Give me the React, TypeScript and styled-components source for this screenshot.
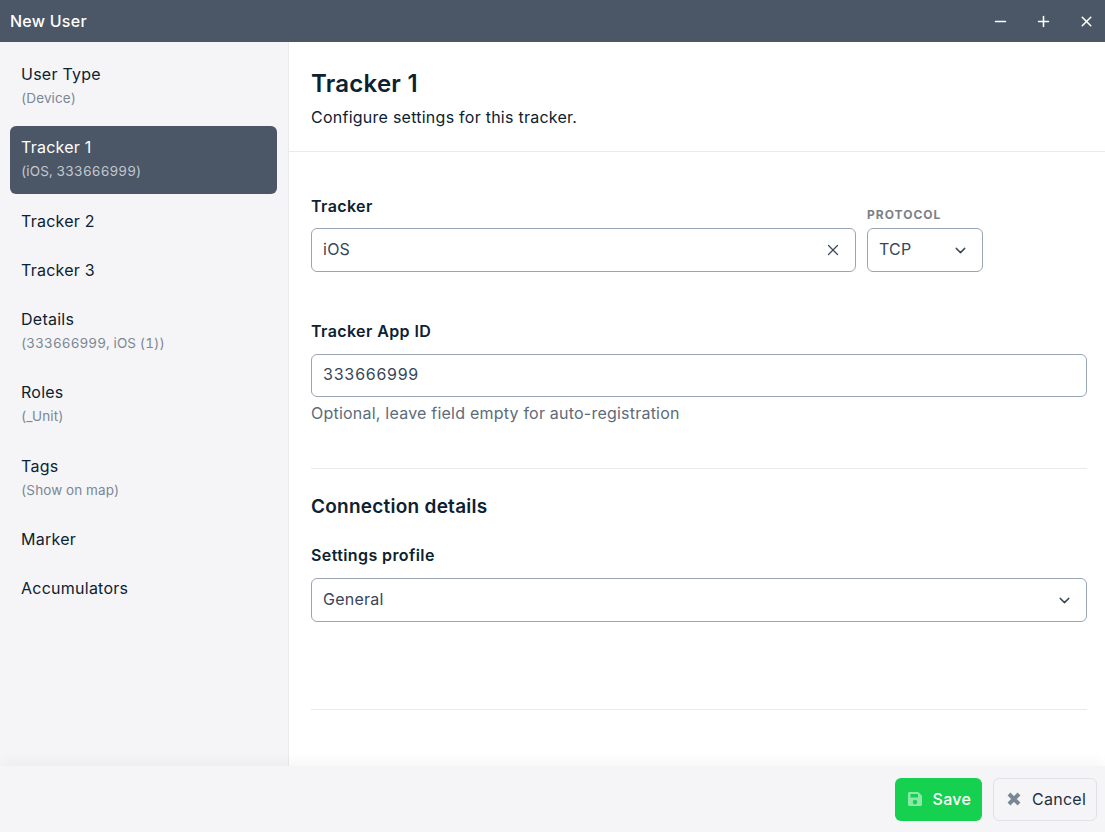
import React from "react";
import styled, { createGlobalStyle } from "styled-components";
import { ChevronDown, Minus, Plus, X } from "lucide-react";

const GlobalStyle = createGlobalStyle`
  * { box-sizing: border-box; }
  html, body { margin: 0; padding: 0; height: 100%; }
  body {
    font-family: Inter, "Liberation Sans", sans-serif;
    letter-spacing: 0.25px;
    color: #0c2231;
    background: #fff;
  }
`;

interface NavEntry {
  title: string;
  sub?: string;
  active?: boolean;
}

const navEntries: NavEntry[] = [
  { title: "User Type", sub: "(Device)" },
  { title: "Tracker 1", sub: "(iOS, 333666999)", active: true },
  { title: "Tracker 2" },
  { title: "Tracker 3" },
  { title: "Details", sub: "(333666999, iOS (1))" },
  { title: "Roles", sub: "(_Unit)" },
  { title: "Tags", sub: "(Show on map)" },
  { title: "Marker" },
  { title: "Accumulators" },
];

const App = () => {
  return (
    <Window>
      <GlobalStyle />
      <TitleBar>
        <WindowTitle>New User</WindowTitle>
        <WindowControls>
          <Minus size={17} strokeWidth={2.2} />
          <Plus size={17} strokeWidth={2.2} />
          <X size={17} strokeWidth={2.2} />
        </WindowControls>
      </TitleBar>
      <Body>
        <Sidebar>
          {navEntries.map((entry) => (
            <NavItem key={entry.title} $active={entry.active} $hasSub={!!entry.sub}>
              <NavTitle>{entry.title}</NavTitle>
              {entry.sub && <NavSub $active={entry.active}>{entry.sub}</NavSub>}
            </NavItem>
          ))}
        </Sidebar>
        <Main>
          <Header>
            <Heading>Tracker 1</Heading>
            <Subheading>Configure settings for this tracker.</Subheading>
          </Header>
          <Form>
            <TrackerRow>
              <GrowField>
                <FieldLabel $tight>Tracker</FieldLabel>
                <Control>
                  <span>iOS</span>
                  <X size={18} strokeWidth={1.75} color="#3b4a5a" />
                </Control>
              </GrowField>
              <ProtocolField>
                <SmallLabel>PROTOCOL</SmallLabel>
                <Control>
                  <span>TCP</span>
                  <ChevronDown size={17} strokeWidth={2} color="#3b4a5a" />
                </Control>
              </ProtocolField>
            </TrackerRow>
            <AppIdField>
              <FieldLabel>Tracker App ID</FieldLabel>
              <Control $short>
                <span>333666999</span>
              </Control>
              <Hint>Optional, leave field empty for auto-registration</Hint>
            </AppIdField>
            <Divider />
            <SectionTitle>Connection details</SectionTitle>
            <FieldLabel>Settings profile</FieldLabel>
            <Control>
              <span>General</span>
              <ChevronDown size={17} strokeWidth={2} color="#3b4a5a" />
            </Control>
            <BottomDivider />
          </Form>
        </Main>
      </Body>
      <Footer>
        <SaveButton>
          <SaveIcon />
          Save
        </SaveButton>
        <CancelButton>
          <CancelIcon />
          Cancel
        </CancelButton>
      </Footer>
    </Window>
  );
};

const SaveIcon = () => (
  <svg width="16" height="16" viewBox="0 0 16 16" fill="#8be8a8">
    <path d="M2.500 1h8.700L15 4.800V13.500c0 .8-.7 1.500-1.500 1.500h-11C1.700 15 1 14.300 1 13.500V2.500C1 1.700 1.700 1 2.500 1zM3.500 3v3.500h7.500V3.600L10.400 3zM8 8.800a2.300 2.300 0 1 0 0 4.600 2.300 2.300 0 0 0 0-4.600z" fillRule="evenodd" />
  </svg>
);

const CancelIcon = () => (
  <svg width="14" height="14" viewBox="0 0 14 14" fill="none" stroke="#7b8794" strokeWidth="4" strokeLinecap="butt">
    <path d="M2 2l10 10M12 2L2 12" />
  </svg>
);

export default App;

const Window = styled.div`
  display: flex;
  flex-direction: column;
  width: 1105px;
  height: 832px;
  overflow: hidden;
`;

const TitleBar = styled.div`
  display: flex;
  align-items: center;
  justify-content: space-between;
  flex: 0 0 42px;
  padding: 0 10px;
  background: #4b5766;
  color: #fff;
`;

const WindowTitle = styled.div`
  font-size: 16px;
  font-weight: 500;
`;

const WindowControls = styled.div`
  display: flex;
  align-items: center;
  gap: 26px;
`;

const Body = styled.div`
  display: flex;
  flex: 1;
  min-height: 0;
`;

const Sidebar = styled.nav`
  display: flex;
  flex-direction: column;
  gap: 5px;
  flex: 0 0 289px;
  padding: 10.6px 11px 0 10px;
  background: #f5f5f8;
  border-right: 1px solid #e8eaee;
`;

const NavItem = styled.div<{ $active?: boolean; $hasSub: boolean }>`
  height: ${(p) => (p.$hasSub ? "68.4px" : "44.15px")};
  padding: ${(p) => (p.$hasSub ? "10.1px" : "10.4px")} 11px;
  border-radius: 6px;
  background: ${(p) => (p.$active ? "#4b5766" : "transparent")};
  color: ${(p) => (p.$active ? "#fff" : "#0c2231")};
`;

const NavTitle = styled.div`
  font-size: 16px;
  line-height: 22px;
`;

const NavSub = styled.div<{ $active?: boolean }>`
  font-size: 13.5px;
  line-height: 26.6px;
  letter-spacing: 0.1px;
  font-variant-numeric: tabular-nums;
  color: ${(p) => (p.$active ? "#c3c8cf" : "#7b8794")};
`;

const Main = styled.main`
  flex: 1;
  min-width: 0;
  background: #fff;
`;

const Header = styled.header`
  height: 110px;
  padding: 25px 22px 0;
  border-bottom: 1px solid #e8eaee;
`;

const Heading = styled.h1`
  margin: 0;
  font-size: 24px;
  line-height: 34px;
  font-weight: 600;
`;

const Subheading = styled.p`
  margin: 4px 0 0;
  font-size: 16px;
  line-height: 24px;
`;

const Form = styled.div`
  padding: 43px 18px 0 22px;
`;

const TrackerRow = styled.div`
  display: flex;
  gap: 11px;
`;

const GrowField = styled.div`
  flex: 1;
`;

const ProtocolField = styled.div`
  flex: 0 0 116px;
  margin-right: 104px;
`;

const FieldLabel = styled.div<{ $tight?: boolean }>`
  margin-bottom: ${(p) => (p.$tight ? "11px" : "12px")};
  font-size: 16px;
  line-height: 22px;
  font-weight: 600;
  letter-spacing: 0.4px;
`;

const SmallLabel = styled.div`
  margin-bottom: 6px;
  padding-top: 13px;
  font-size: 12px;
  line-height: 14px;
  font-weight: 700;
  letter-spacing: 1px;
  color: #7d7f85;
`;

const Control = styled.div<{ $short?: boolean }>`
  display: flex;
  align-items: center;
  justify-content: space-between;
  height: ${(p) => (p.$short ? "43px" : "44px")};
  padding: 0 13px ${(p) => (p.$short ? "3px" : "2px")} 11px;
  border: 1px solid #9aa5b3;
  border-radius: 6px;
  font-size: 16px;
  font-variant-numeric: tabular-nums;
  letter-spacing: 0.25px;
  color: #37465a;
  background: #fff;

  svg {
    margin-bottom: -2px;
  }
`;

const AppIdField = styled.div`
  margin-top: 48px;
`;

const Hint = styled.div`
  margin-top: 5px;
  font-size: 16px;
  line-height: 22px;
  letter-spacing: 0.22px;
  color: #5d6b7a;
`;

const Divider = styled.hr`
  margin: 44px 0 0;
  border: 0;
  border-top: 1px solid #e8eaee;
`;

const SectionTitle = styled.h2`
  margin: 25px 0 24px;
  font-size: 19px;
  line-height: 26px;
  font-weight: 600;
`;

const BottomDivider = styled.hr`
  margin: 87px 0 0;
  border: 0;
  border-top: 1px solid #e8eaee;
`;

const Footer = styled.footer`
  display: flex;
  align-items: center;
  justify-content: flex-end;
  gap: 11px;
  flex: 0 0 66px;
  padding: 0 8px 0 0;
  background: #f5f5f8;
  box-shadow: 0 -6px 12px rgba(0, 0, 0, 0.03);
`;

const SaveButton = styled.button`
  display: flex;
  align-items: center;
  gap: 10px;
  height: 43px;
  padding: 0 11px 0 12px;
  border: 0;
  border-radius: 6px;
  background: #16d14f;
  color: #fff;
  font-family: inherit;
  font-size: 16px;
  font-weight: 500;
  letter-spacing: 0.25px;
`;

const CancelButton = styled.button`
  display: flex;
  align-items: center;
  gap: 11px;
  height: 43px;
  padding: 0 10px 0 13px;
  border: 1px solid #dfe2e7;
  border-radius: 6px;
  background: #f5f5f8;
  color: #1f2f42;
  font-family: inherit;
  font-size: 16px;
  letter-spacing: 0.25px;
`;
